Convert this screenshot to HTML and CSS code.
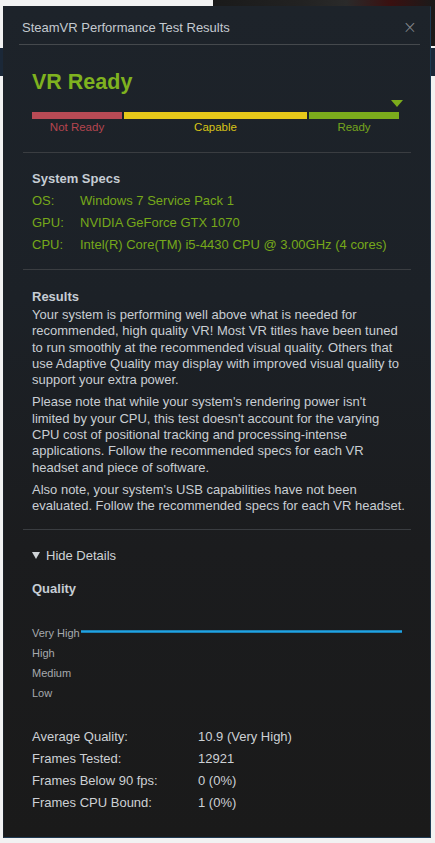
FILE: index.html
```html
<!DOCTYPE html>
<html>
<head>
<meta charset="utf-8">
<link rel="stylesheet" href="styles.css">
</head>
<body>
<div class="desktop">
  <div class="bg-photo"></div>
  <div class="bg-band"></div>
  <div class="window">
    <div class="titlebar">
      <span class="title">SteamVR Performance Test Results</span>
      <span class="close">×</span>
    </div>
    <div class="content">
      <section class="section rating">
        <div class="verdict">VR Ready</div>
        <div class="marker-row"><span class="marker" style="margin-left:359px"></span></div>
        <div class="scale">
          <div class="seg seg-red"><div class="seg-bar"></div><div class="seg-label">Not Ready</div></div>
          <div class="seg seg-yellow"><div class="seg-bar"></div><div class="seg-label">Capable</div></div>
          <div class="seg seg-green"><div class="seg-bar"></div><div class="seg-label">Ready</div></div>
        </div>
      </section>
      <hr class="sep">
      <section class="section specs">
        <h2 class="heading">System Specs</h2>
        <div class="spec-row"><span class="spec-key">OS:</span><span>Windows 7 Service Pack 1</span></div>
        <div class="spec-row"><span class="spec-key">GPU:</span><span>NVIDIA GeForce GTX 1070</span></div>
        <div class="spec-row"><span class="spec-key">CPU:</span><span>Intel(R) Core(TM) i5-4430 CPU @ 3.00GHz (4 cores)</span></div>
      </section>
      <hr class="sep">
      <section class="section results">
        <h2 class="heading">Results</h2>
        <p>Your system is performing well above what is needed for recommended, high quality VR! Most VR titles have been tuned to run smoothly at the recommended visual quality. Others that use Adaptive Quality may display with improved visual quality to support your extra power.</p>
        <p>Please note that while your system's rendering power isn't limited by your CPU, this test doesn't account for the varying CPU cost of positional tracking and processing-intense applications. Follow the recommended specs for each VR headset and piece of software.</p>
        <p>Also note, your system's USB capabilities have not been evaluated. Follow the recommended specs for each VR headset.</p>
      </section>
      <hr class="sep">
      <section class="section details">
        <div class="toggle"><span class="toggle-tri"></span>Hide Details</div>
        <h2 class="heading quality-h">Quality</h2>
        <div class="chart">
          <span class="axis-label">Very High</span>
          <span class="axis-label">High</span>
          <span class="axis-label">Medium</span>
          <span class="axis-label">Low</span>
          <svg class="plot" viewBox="0 0 321 80" preserveAspectRatio="none">
            <line x1="0" y1="8.5" x2="321" y2="8.5" stroke="#1fa3e4" stroke-width="2.5"/>
          </svg>
        </div>
        <div class="stats">
          <span>Average Quality:</span><span>10.9 (Very High)</span>
          <span>Frames Tested:</span><span>12921</span>
          <span>Frames Below 90 fps:</span><span>0 (0%)</span>
          <span>Frames CPU Bound:</span><span>1 (0%)</span>
        </div>
      </section>
    </div>
  </div>
</div>
</body>
</html>
```
FILE: styles.css
```css
* { box-sizing: border-box; }
html, body { margin: 0; padding: 0; }
body {
  width: 435px;
  height: 843px;
  overflow: hidden;
  background: #f2f2f2;
  font-family: "Liberation Sans", Arial, sans-serif;
}
.desktop {
  position: relative;
  width: 435px;
  height: 843px;
  padding: 6px 4px 5px 3px;
}
.bg-photo {
  position: absolute;
  left: 213px;
  top: 0;
  width: 222px;
  height: 46px;
  background: linear-gradient(90deg, #1a1a1a 0%, #222 40%, #2a2a2a 60%, #3a1010 80%, #1a1a1a 100%);
}
.bg-band {
  position: absolute;
  left: 0;
  top: 48px;
  width: 435px;
  height: 28px;
  background: #1b2838;
}
.window {
  position: relative;
  width: 428px;
  height: 832px;
  background: linear-gradient(180deg, #1d232a 0%, #1c2127 35%, #1b1c1e 65%, #1a1a1a 100%);
  border: 1px solid #1f3a52;
  border-left-color: #1d232a;
  border-top-color: #1d232a;
  display: flex;
  flex-direction: column;
}
.titlebar {
  height: 38px;
  margin: 0 10px 0 15px;
  padding: 4px 0 0 3px;
  border-bottom: 1px solid #45494d;
  display: flex;
  align-items: center;
  justify-content: space-between;
}
.title {
  color: #c4cad0;
  font-size: 13px;
}
.close {
  color: #858a8f;
  font-size: 17px;
  line-height: 1;
  margin-right: 3px;
  font-family: "DejaVu Sans", sans-serif;
  font-weight: 300;
}
.content {
  padding: 0 28px;
  display: flex;
  flex-direction: column;
}
.section { display: flex; flex-direction: column; }
.sep {
  border: 0;
  height: 1px;
  background: #3a3d41;
  margin: 0 -9px;
}
.rating { padding-top: 24px; padding-bottom: 17px; }
.verdict {
  color: #7fb21f;
  font-size: 21.5px;
  font-weight: bold;
  line-height: 26px;
}
.marker-row { display: flex; height: 7px; margin-top: 5px; }
.marker {
  width: 0; height: 0;
  border-left: 6px solid transparent;
  border-right: 6px solid transparent;
  border-top: 7px solid #7cac1c;
}
.scale {
  display: grid;
  grid-template-columns: 90px 183px 90px;
  column-gap: 2px;
  margin-top: 5px;
}
.seg-bar { height: 7px; }
.seg-label { text-align: center; font-size: 11.5px; line-height: 15px; margin-top: 1px; }
.seg-red .seg-bar { background: #b84a55; }
.seg-red .seg-label { color: #b5454f; }
.seg-yellow .seg-bar { background: #e6c81a; }
.seg-yellow .seg-label { color: #d8c417; }
.seg-green .seg-bar { background: #7cac1c; }
.seg-green .seg-label { color: #76a51d; }

.heading {
  margin: 0;
  font-size: 13px;
  line-height: 18px;
  font-weight: bold;
  color: #c6cdd4;
}
.specs { padding-top: 17px; padding-bottom: 13px; }
.specs .heading { margin-bottom: 2px; }
.spec-row {
  display: grid;
  grid-template-columns: 48px 1fr;
  line-height: 22px;
  font-size: 13px;
  color: #76a81a;
}
.results { padding-top: 18px; padding-bottom: 14px; }
.results p {
  margin: 6px -3.8px 0 0;
  font-size: 13px;
  line-height: 16.3px;
  color: #c9ced3;
}
.results .heading + p { margin-top: 1px; }

.details { padding-top: 18px; }
.toggle {
  display: flex;
  align-items: center;
  font-size: 13px;
  line-height: 16px;
  color: #cfd3d6;
}
.toggle-tri {
  width: 0; height: 0;
  border-left: 4.5px solid transparent;
  border-right: 4.5px solid transparent;
  border-top: 7px solid #cfd3d6;
  margin-right: 6px;
}
.quality-h { margin-top: 16px; }
.chart {
  margin-top: 25px;
  display: grid;
  grid-template-columns: 49px 1fr;
  grid-template-rows: repeat(4, 20px);
}
.axis-label {
  grid-column: 1;
  font-size: 11px;
  line-height: 20px;
  color: #a6aaae;
  white-space: nowrap;
}
.plot {
  grid-column: 2;
  grid-row: 1 / 5;
  width: 321px;
  height: 80px;
}
.stats {
  margin-top: 23px;
  display: grid;
  grid-template-columns: 166px 1fr;
  font-size: 13px;
  line-height: 22px;
  color: #cdd1d5;
}
```
